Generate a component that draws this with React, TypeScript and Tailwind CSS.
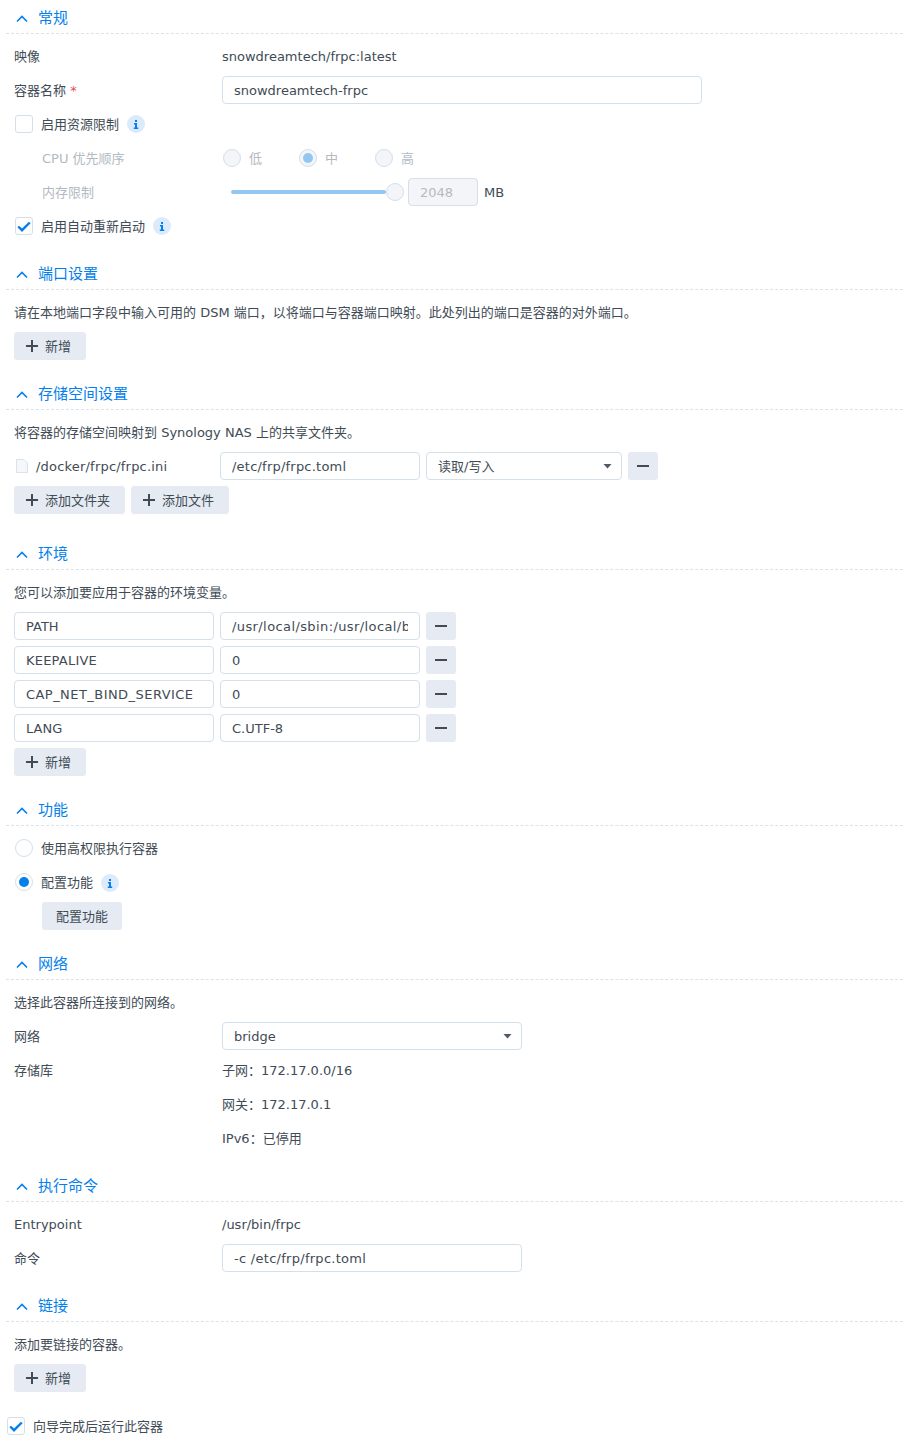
const Chevron = () => (
  <svg width="12" height="8" viewBox="0 0 12 8" fill="none" className="shrink-0">
    <path d="M1 6.5 L6 1.5 L11 6.5" stroke="#057feb" strokeWidth="1.6" />
  </svg>
);

const Section = ({ title, children, className = "mb-5" }: { title: string; children: React.ReactNode; className?: string }) => (
  <div className={className}>
    <div className="h-[30px] flex items-center pl-[10px] border-b border-dashed border-[#d9e3ec] text-[15px] text-[#057feb]">
      <Chevron />
      <span className="ml-[10px]">{title}</span>
    </div>
    <div className="mt-2 pl-2 flex flex-col gap-[6px]">{children}</div>
  </div>
);

const Row = ({ children, className = "" }: { children: React.ReactNode; className?: string }) => (
  <div className={`h-7 flex items-center ${className}`}>{children}</div>
);

// body text sits 1px below the row's centre line
const Txt = ({ children, className = "" }: { children: React.ReactNode; className?: string }) => (
  <span className={`mt-[2px] ${className}`}>{children}</span>
);

const Field = ({ value, className = "", disabled = false }: { value: string; className?: string; disabled?: boolean }) => (
  <input
    readOnly
    value={value}
    className={`h-7 px-[11px] rounded-[4px] border border-[#d3dfe9] outline-none text-[13px] ${
      disabled ? "bg-[#f3f5f9] text-[#b3bac2]" : "bg-white text-[#414b55]"
    } ${className}`}
  />
);

const Select = ({ value, className = "" }: { value: string; className?: string }) => (
  <div className={`h-7 pl-[11px] pr-2 rounded-[4px] border border-[#d3dfe9] bg-white flex items-center justify-between ${className}`}>
    <Txt>{value}</Txt>
    <svg width="10" height="5" viewBox="0 0 10 5">
      <path d="M0.5 0 H8.5 L4.5 4.5 Z" fill="#4f5a66" />
    </svg>
  </div>
);

const Check = ({ on = false }: { on?: boolean }) => (
  <span className="w-[18px] h-[18px] shrink-0 rounded-[3px] border border-[#d3dfe9] bg-white flex items-center justify-center">
    {on && (
      <svg width="14" height="11" viewBox="0 0 14 11" fill="none">
        <path d="M1.2 5.5 L5 9.2 L12.8 1.5" stroke="#057feb" strokeWidth="2.4" />
      </svg>
    )}
  </span>
);

const Radio = ({ on = false, disabled = false }: { on?: boolean; disabled?: boolean }) => (
  <span
    className={`w-[18px] h-[18px] shrink-0 rounded-full border border-[#d3dfe9] flex items-center justify-center ${
      disabled ? "bg-[#f3f5f9]" : "bg-white"
    }`}
  >
    {on && <span className={`w-[10px] h-[10px] rounded-full ${disabled ? "bg-[#94c6f3]" : "bg-[#057feb]"}`} />}
  </span>
);

const Info = ({ className = "" }: { className?: string }) => (
  <span className={`w-[18px] h-[18px] shrink-0 rounded-full bg-[#dcebfb] flex items-center justify-center ${className}`}>
    <svg width="6" height="9" viewBox="0 0 6 9">
      <path d="M2 0 H4 V2 H2 Z M1 3 H4 V7.5 H5.2 V9 H0.8 V7.5 H2 V4.5 H1 Z" fill="#057feb" />
    </svg>
  </span>
);

const Plus = () => (
  <svg width="12" height="12" viewBox="0 0 12 12" className="shrink-0">
    <path d="M5 0 H7 V5 H12 V7 H7 V12 H5 V7 H0 V5 H5 Z" fill="#414b55" />
  </svg>
);

const AddButton = ({ label, className = "w-[72px]" }: { label: string; className?: string }) => (
  <button className={`h-7 pl-3 rounded-[3px] bg-[#e6ebf3] flex items-center gap-[7px] text-[#414b55] ${className}`}>
    <Plus />
    <Txt>{label}</Txt>
  </button>
);

const Minus = () => (
  <button className="w-[30px] h-7 shrink-0 rounded-[3px] bg-[#e6ebf3] flex items-center justify-center">
    <span className="w-3 h-[2px] bg-[#414b55]" />
  </button>
);

const envVars = [
  ["PATH", "/usr/local/sbin:/usr/local/bin:/usr/sbin:/usr/bin:/sbin:/bin", "", "tracking-[0.4px]"],
  ["KEEPALIVE", "0", "tracking-[0.22px]", ""],
  ["CAP_NET_BIND_SERVICE", "0", "tracking-[0.45px]", ""],
  ["LANG", "C.UTF-8", "", ""],
];

const Label = ({ children, className = "" }: { children?: React.ReactNode; className?: string }) => (
  <div className={`w-[208px] shrink-0 mt-[2px] ${className}`}>{children}</div>
);

export default function App() {
  return (
    <div className="w-[904px] h-[1449px] pt-1 pl-[6px] pr-px bg-white text-[13px] text-[#414b55] font-['DejaVu_Sans','Noto_Sans_CJK_SC',sans-serif]">
      <Section title="常规">
        <Row>
          <Label>映像</Label>
          <Txt>snowdreamtech/frpc:latest</Txt>
        </Row>
        <Row>
          <Label>
            容器名称 <span className="text-[#eb4a5a]">*</span>
          </Label>
          <Field value="snowdreamtech-frpc" className="w-[480px]" />
        </Row>
        <Row className="pl-px">
          <Check />
          <Txt className="ml-2">启用资源限制</Txt>
          <Info className="ml-2" />
        </Row>
        <Row className="text-[#b3bac2]">
          <Label className="pl-7">CPU 优先顺序</Label>
          <div className="ml-px w-[76px] flex items-center gap-2">
            <Radio disabled />
            <Txt>低</Txt>
          </div>
          <div className="w-[76px] flex items-center gap-2">
            <Radio disabled on />
            <Txt>中</Txt>
          </div>
          <div className="flex items-center gap-2">
            <Radio disabled />
            <Txt>高</Txt>
          </div>
        </Row>
        <Row>
          <Label className="pl-7 text-[#b3bac2]">内存限制</Label>
          <div className="ml-[9px] w-[155px] h-1 rounded-full bg-[#94c6f3]" />
          <Radio disabled />
          <Field value="2048" disabled className="ml-1 w-[70px]" />
          <Txt className="ml-[6px]">MB</Txt>
        </Row>
        <Row className="pl-px">
          <Check on />
          <Txt className="ml-2">启用自动重新启动</Txt>
          <Info className="ml-2" />
        </Row>
      </Section>

      <Section title="端口设置">
        <Row>
          <Txt>请在本地端口字段中输入可用的 DSM 端口，以将端口与容器端口映射。此处列出的端口是容器的对外端口。</Txt>
        </Row>
        <Row>
          <AddButton label="新增" />
        </Row>
      </Section>

      <Section title="存储空间设置" className="mb-[26px]">
        <Row>
          <Txt>将容器的存储空间映射到 Synology NAS 上的共享文件夹。</Txt>
        </Row>
        <Row>
          <div className="w-[206px] shrink-0 pl-[2px] flex items-center gap-2">
            <svg width="12" height="14" viewBox="0 0 12 14" fill="#f5f7fa" stroke="#dbe2ea" className="shrink-0">
              <path d="M0.5 0.5 H8 L11.5 4 V13.5 H0.5 Z" />
            </svg>
            <Txt className="tracking-[0.2px]">/docker/frpc/frpc.ini</Txt>
          </div>
          <Field value="/etc/frp/frpc.toml" className="w-[200px] tracking-[0.22px]" />
          <Select value="读取/写入" className="ml-[6px] w-[196px]" />
          <div className="ml-[6px]">
            <Minus />
          </div>
        </Row>
        <Row className="gap-[6px]">
          <AddButton label="添加文件夹" className="w-[111px]" />
          <AddButton label="添加文件" className="w-[98px]" />
        </Row>
      </Section>

      <Section title="环境">
        <Row>
          <Txt>您可以添加要应用于容器的环境变量。</Txt>
        </Row>
        {envVars.map(([key, value, keyClass, valueClass]) => (
          <Row key={key} className="gap-[6px]">
            <Field value={key} className={`w-[200px] ${keyClass}`} />
            <Field value={value} className={`w-[200px] ${valueClass}`} />
            <Minus />
          </Row>
        ))}
        <Row>
          <AddButton label="新增" />
        </Row>
      </Section>

      <Section title="功能">
        <Row className="pl-px">
          <Radio />
          <Txt className="ml-2">使用高权限执行容器</Txt>
        </Row>
        <Row className="pl-px">
          <Radio on />
          <Txt className="ml-2">配置功能</Txt>
          <Info className="ml-2 mt-[2px]" />
        </Row>
        <Row className="pl-7">
          <button className="w-20 h-7 pt-[2px] rounded-[3px] bg-[#e6ebf3] text-[#414b55]">配置功能</button>
        </Row>
      </Section>

      <Section title="网络">
        <Row>
          <Txt>选择此容器所连接到的网络。</Txt>
        </Row>
        <Row>
          <Label>网络</Label>
          <Select value="bridge" className="w-[300px]" />
        </Row>
        <Row>
          <Label>存储库</Label>
          <Txt>子网：172.17.0.0/16</Txt>
        </Row>
        <Row>
          <Label />
          <Txt>网关：172.17.0.1</Txt>
        </Row>
        <Row>
          <Label />
          <Txt>IPv6：已停用</Txt>
        </Row>
      </Section>

      <Section title="执行命令">
        <Row>
          <Label>Entrypoint</Label>
          <Txt>/usr/bin/frpc</Txt>
        </Row>
        <Row>
          <Label>命令</Label>
          <Field value="-c /etc/frp/frpc.toml" className="w-[300px] tracking-[0.28px]" />
        </Row>
      </Section>

      <Section title="链接">
        <Row>
          <Txt>添加要链接的容器。</Txt>
        </Row>
        <Row>
          <AddButton label="新增" />
        </Row>
      </Section>

      <Row className="pl-px">
        <Check on />
        <Txt className="ml-2">向导完成后运行此容器</Txt>
      </Row>
    </div>
  );
}
